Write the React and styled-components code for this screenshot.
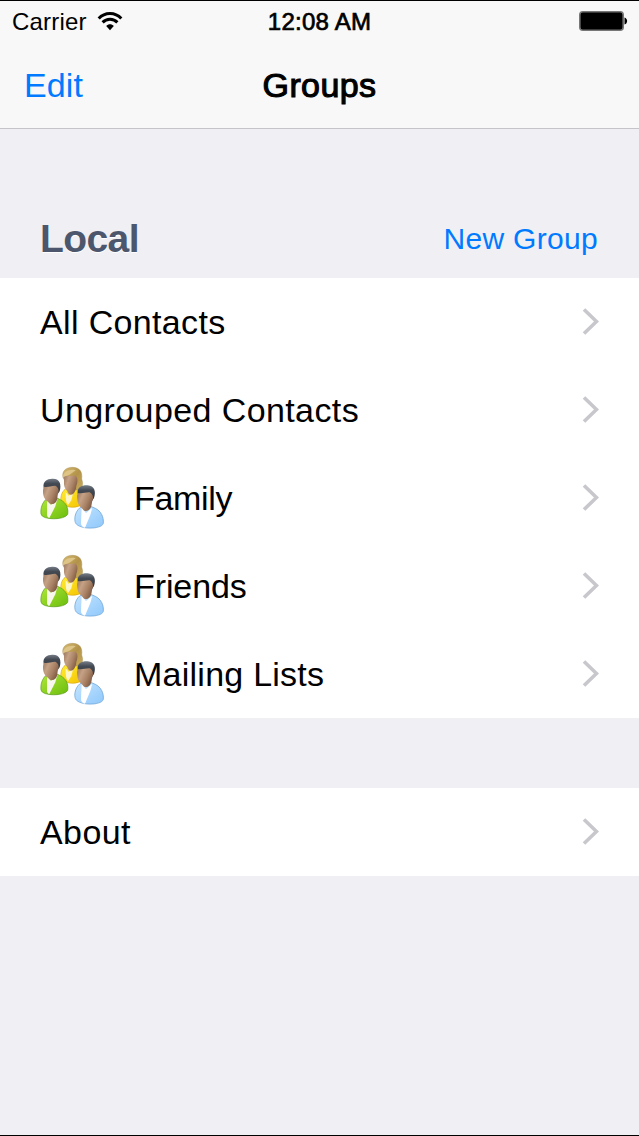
import styled, { createGlobalStyle } from 'styled-components';

const GlobalStyle = createGlobalStyle`
  * {
    box-sizing: border-box;
  }

  body {
    margin: 0;
    background: #efeff4;
    font-family: 'Liberation Sans', Arial, sans-serif;
    color: #000;
  }
`;

const Screen = styled.div`
  display: flex;
  flex-direction: column;
  height: 1136px;
  background: #efeff4;
  border-top: 1px solid #000;
  border-bottom: 1px solid #000;
  overflow: hidden;
`;

const Header = styled.header`
  height: 128px;
  background: #f8f8f8;
  border-bottom: 1px solid #c4c4c9;
`;

const StatusBar = styled.div`
  display: grid;
  grid-template-columns: 1fr auto 1fr;
  align-items: center;
  height: 40px;
  padding: 0 11px 0 12px;
`;

const Carrier = styled.div`
  display: flex;
  align-items: center;
  gap: 10px;
  font-size: 24px;
  letter-spacing: 0.2px;
`;

const StatusText = styled.span`
  padding-top: 2px;
`;

const Clock = styled(StatusText)`
  padding-right: 1px;
  font-size: 24px;
  letter-spacing: 0.25px;
  -webkit-text-stroke: 0.7px #000;
`;

const BatteryIcon = styled.svg`
  justify-self: end;
`;

const NavBar = styled.div`
  display: grid;
  grid-template-columns: 1fr auto 1fr;
  align-items: center;
  height: 88px;
  padding: 0 24px;
`;

const NavButton = styled.a`
  font-size: ${({ $size }) => $size || 34}px;
  letter-spacing: ${({ $spacing }) => $spacing || 0}px;
  color: #007aff;
`;

const Title = styled.div`
  font-size: 34px;
  letter-spacing: 0.4px;
  -webkit-text-stroke: 1.1px #000;
`;

const SectionHeader = styled.div`
  display: flex;
  justify-content: space-between;
  align-items: center;
  height: 149px;
  padding: 71px 41px 0 40px;
`;

const SectionTitle = styled.h2`
  margin: 0;
  font-size: 39px;
  letter-spacing: -0.6px;
  color: #4c566c;
  text-shadow: 0 1px 0 #fff;
`;

const List = styled.div`
  margin-bottom: 70px;
  background: #fff;
`;

const Row = styled.div`
  display: flex;
  align-items: center;
  height: 88px;
  padding: 0 40px;
`;

const RowLabel = styled.span`
  flex: 1;
  font-size: 34px;
  letter-spacing: ${({ $spacing }) => $spacing}px;
`;

const GroupIcon = styled.svg`
  width: 64px;
  height: 64px;
  margin-right: 30px;
`;

const Chevron = styled.svg`
  width: 18px;
  height: 28px;
`;

const groups = [
  { label: 'All Contacts', spacing: 0.35 },
  { label: 'Ungrouped Contacts', spacing: 0.4 },
  { label: 'Family', spacing: -0.3, icon: true },
  { label: 'Friends', spacing: -0.1, icon: true },
  { label: 'Mailing Lists', spacing: 0.25, icon: true },
];

function Wifi() {
  return (
    <svg width="26" height="20" viewBox="0 0 26 20" fill="none" stroke="#000" strokeWidth="3">
      <path d="M1.7 7.4C7.8 .7 18.2 .7 24.3 7.4" />
      <path d="M5.6 11.4C9.7 7.2 16.3 7.2 20.4 11.4" />
      <path d="M9.2 15C11.3 12.7 14.7 12.7 16.8 15L13 19.2Z" fill="#000" stroke="none" />
    </svg>
  );
}

function Battery() {
  return (
    <BatteryIcon width="49" height="20" viewBox="0 0 49 20">
      <rect x=".8" y=".8" width="43.4" height="18.4" rx="3" fill="#000" stroke="#777" strokeWidth="1.6" />
      <path d="M45.5 6.5C49 7.5 49 12.5 45.5 13.5Z" />
    </BatteryIcon>
  );
}

// Shared gradients, referenced by every group icon
function IconColors() {
  return (
    <svg width="0" height="0" style={{ position: 'absolute' }}>
      <defs>
        <linearGradient id="skin" x1="0" y1="0" x2="1" y2=".5">
          <stop offset="0" stopColor="#9a7a62" />
          <stop offset=".35" stopColor="#c5a185" />
          <stop offset=".7" stopColor="#a98265" />
          <stop offset="1" stopColor="#825d45" />
        </linearGradient>
        <linearGradient id="hair" x1="0" y1="0" x2="0" y2="1">
          <stop offset="0" stopColor="#757d87" />
          <stop offset=".3" stopColor="#444a53" />
          <stop offset="1" stopColor="#2f3238" />
        </linearGradient>
        <linearGradient id="blond" x1="0" y1="0" x2="1" y2="1">
          <stop offset="0" stopColor="#d8bd76" />
          <stop offset=".5" stopColor="#b39349" />
          <stop offset="1" stopColor="#c9ab5c" />
        </linearGradient>
        <linearGradient id="green" x1="0" y1="0" x2="1" y2="1">
          <stop offset="0" stopColor="#b2e83a" />
          <stop offset="1" stopColor="#6abd0c" />
        </linearGradient>
        <linearGradient id="yellow" x1="0" y1="0" x2="1" y2="1">
          <stop offset="0" stopColor="#ffee35" />
          <stop offset="1" stopColor="#f5c400" />
        </linearGradient>
        <linearGradient id="blue" x1="0" y1="0" x2="1" y2="1">
          <stop offset="0" stopColor="#c5e5ff" />
          <stop offset="1" stopColor="#8fc8fb" />
        </linearGradient>
      </defs>
    </svg>
  );
}

function People() {
  return (
    <GroupIcon viewBox="30 21 192 192">
      <path d="M106 90C94 100 90 117 94 132C108 146 132 148 150 140L154 100L136 88Z" fill="url(#yellow)" stroke="#d5a51a" strokeWidth="2" />
      <path d="M107 100L116 110L130 100L124 124L114 138Q106 132 107 100Z" fill="#fff6c8" />
      <path d="M99 56C94 34 112 24 128 25C150 25 158 40 155 60C161 76 158 90 144 92L126 93L108 70Z" fill="url(#blond)" stroke="#967a3b" strokeWidth="1" />
      <path d="M104 50C115 52 128 49 136 50C145 54 143 71 139 80C138 92 135 99 129 105C122 110 114 106 112 97C104 89 101 79 102 68C102 61 101 56 104 50Z" fill="url(#skin)" />
      <path d="M99 54C99 38 119 29 137 34C129 39 120 50 99 54Z" fill="#dec487" />

      <path d="M50 119C37 130 31 147 33 165C36 184 104 184 113 166C116 149 109 131 91 122L77 115Z" fill="url(#green)" stroke="#559912" strokeWidth="2" />
      <path d="M51 123L63 138L82 120L76 142L58 177Q50 174 51 165Z" fill="#f7f7ee" />
      <path d="M41 86C37 66 53 58 69 59C90 59 95 77 89 97L80 108Z" fill="url(#hair)" />
      <path d="M42 83C52 86 63 80 75 80C83 82 88 91 85 102C82 107 83 118 80 125C75 136 61 139 55 129C47 124 42 118 40 108C38 97 39 88 42 83Z" fill="url(#skin)" />

      <path d="M154 143C140 152 132 170 135 187C138 213 215 213 220 193C222 175 213 156 196 148L180 141Z" fill="url(#blue)" stroke="#5d9bd1" strokeWidth="2" />
      <path d="M155 147L168 162L187 146L181 168L165 206Q154 205 153 193Z" fill="#fff" />
      <path d="M143 104C140 84 157 78 173 79C193 80 199 98 192 117L184 129Z" fill="url(#hair)" />
      <path d="M144 102C156 105 168 99 179 100C187 104 191 113 188 123C185 128 186 139 182 146C176 157 163 160 158 150C150 144 145 137 143 128C141 117 140 108 144 102Z" fill="url(#skin)" />
    </GroupIcon>
  );
}

function ListRow({ label, spacing, icon }) {
  return (
    <Row>
      {icon && <People />}
      <RowLabel $spacing={spacing}>{label}</RowLabel>
      <Chevron viewBox="0 0 18 28" fill="none" stroke="#c7c7cc" strokeWidth="3.6">
        <path d="M3 1.5L15.5 13.5L3 25.5" />
      </Chevron>
    </Row>
  );
}

function App() {
  return (
    <Screen>
      <GlobalStyle />
      <IconColors />
      <Header>
        <StatusBar>
          <Carrier>
            <StatusText>Carrier</StatusText>
            <Wifi />
          </Carrier>
          <Clock>12:08 AM</Clock>
          <Battery />
        </StatusBar>
        <NavBar>
          <NavButton $spacing={0.1}>Edit</NavButton>
          <Title>Groups</Title>
        </NavBar>
      </Header>
      <SectionHeader>
        <SectionTitle>Local</SectionTitle>
        <NavButton $size={30} $spacing={0.3}>New Group</NavButton>
      </SectionHeader>
      <List>
        {groups.map((group) => (
          <ListRow key={group.label} {...group} />
        ))}
      </List>
      <List>
        <ListRow label="About" spacing={0.4} />
      </List>
    </Screen>
  );
}

export default App;
